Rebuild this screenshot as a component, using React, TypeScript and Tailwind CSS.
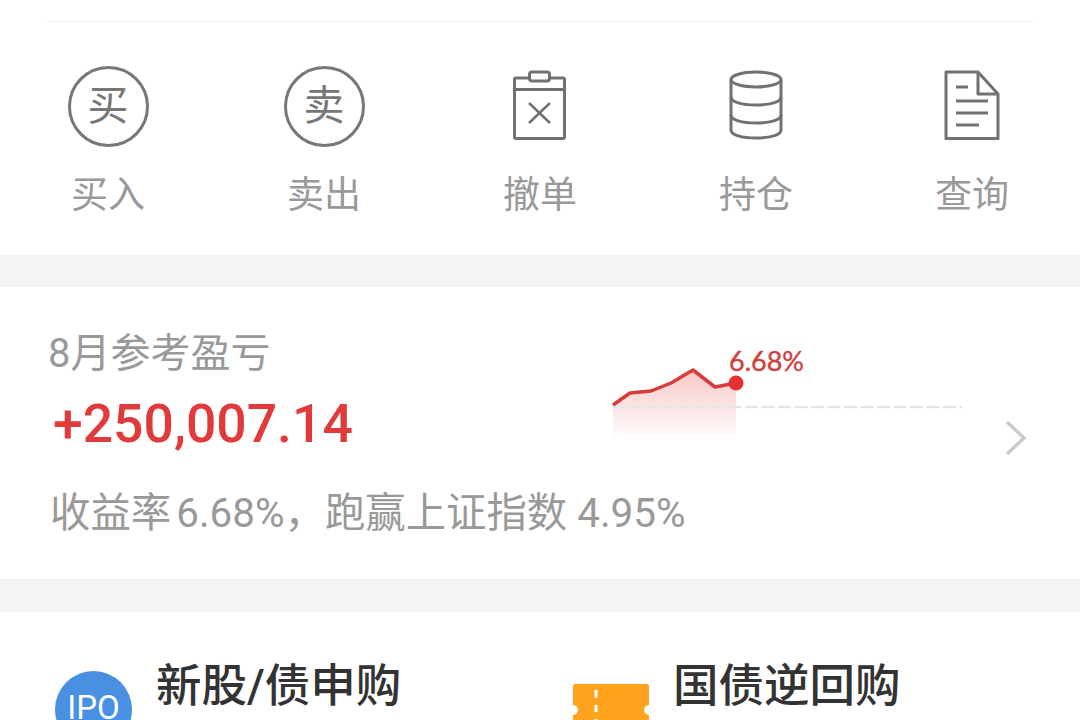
import type { ReactNode } from 'react'

const FONT = "font-['Roboto','Noto_Sans_CJK_SC',sans-serif]"

function CharIcon({ char }: { char: string }) {
  return (
    <div className="w-[81px] h-[81px] rounded-full border-[3px] border-[#777] flex items-center justify-center text-[41px] leading-none text-[#777]">
      {char}
    </div>
  )
}

function CancelIcon() {
  return (
    <svg width="82" height="82" viewBox="0 0 82 82" fill="none" stroke="#717171" strokeWidth="3" strokeLinejoin="round">
      <rect x="15.5" y="13" width="50" height="60.5" rx="1.5" />
      <rect x="30.5" y="7" width="20" height="9" rx="2.5" fill="#fff" />
      <path d="M15.5 24.5H65.5" />
      <path d="M30 38L51 58M51 38L30 58" strokeWidth="2.5" />
    </svg>
  )
}

function HoldIcon() {
  return (
    <svg width="82" height="82" viewBox="0 0 82 82" fill="none" stroke="#717171" strokeWidth="3">
      <ellipse cx="41" cy="14.5" rx="25" ry="7.5" />
      <path d="M16 14.5V65c0 5 11 8 25 8s25-3 25-8V14.5" />
      <path d="M16 32c0 5 11 8 25 8s25-3 25-8" />
      <path d="M16 50c0 5 11 8 25 8s25-3 25-8" />
    </svg>
  )
}

function QueryIcon() {
  return (
    <svg width="82" height="82" viewBox="0 0 82 82" fill="none" stroke="#717171" strokeWidth="3" strokeLinejoin="round">
      <path d="M15 7H47L67 29V73.5H15Z" />
      <path d="M47 7V29H67" />
      <path d="M25 22H37M25 36H57M25 48H57M25 60H48" />
    </svg>
  )
}

const ACTIONS: { label: string; icon: ReactNode }[] = [
  { label: '买入', icon: <CharIcon char="买" /> },
  { label: '卖出', icon: <CharIcon char="卖" /> },
  { label: '撤单', icon: <CancelIcon /> },
  { label: '持仓', icon: <HoldIcon /> },
  { label: '查询', icon: <QueryIcon /> },
]

function Sparkline() {
  return (
    <svg width="352" height="102" viewBox="0 0 352 102" fill="none" className="shrink-0">
      <defs>
        <linearGradient id="spark" x1="0" y1="0" x2="0" y2="1">
          <stop offset="0" stopColor="#e53935" stopOpacity="0.28" />
          <stop offset="1" stopColor="#e53935" stopOpacity="0" />
        </linearGradient>
      </defs>
      <g transform="translate(0 12)">
        <path d="M1 50L18 38L39 36L59 28L81 15L103 32L124 28V85H1Z" fill="url(#spark)" />
        <path d="M1 52H350" stroke="#e6e6e6" strokeWidth="2.5" strokeDasharray="13 3.5" />
        <path d="M1 50L18 38L39 36L59 28L81 15L103 32L124 28" stroke="#d93a3a" strokeWidth="3.5" strokeLinejoin="round" />
        <circle cx="124" cy="28" r="7.5" fill="#e53131" />
        <text x="117" y="16" fontSize="27" fill="#cf4040" stroke="#cf4040" strokeWidth="0.4" fontFamily="Lato, sans-serif">6.68%</text>
      </g>
    </svg>
  )
}

export default function App() {
  return (
    <div className={`h-[720px] overflow-hidden bg-[#f4f4f4] ${FONT}`}>
      <div className="bg-white h-[255px]">
        <div className="mx-[47px] h-[22px] border-b border-[#f0f0f0]" />
        <div className="grid grid-cols-5 pt-[43px]">
          {ACTIONS.map((a) => (
            <div key={a.label} className="flex flex-col items-center">
              <div className="h-[82px] flex items-center justify-center">{a.icon}</div>
              <div className="mt-[23px] text-[37px] leading-[52px] text-[#999]">{a.label}</div>
            </div>
          ))}
        </div>
      </div>

      <div className="mt-[32px] bg-white h-[292px] pt-[39px]">
        <div className="flex">
          <div className="w-[612px] shrink-0 pl-[48px]">
            <div className="text-[40px] leading-[56px] text-[#999]">8月参考盈亏</div>
            <div className="pl-[5px] mt-[12px] text-[53.5px] leading-[60px] font-medium text-[#e03a3a]">
              +250,007.14
            </div>
          </div>
          <div className="mt-[17px]"><Sparkline /></div>
          <svg width="24" height="38" viewBox="0 0 24 38" fill="none" className="mt-[93px] ml-[40px]">
            <path d="M3 3L20 19L3 35" stroke="#cccccc" strokeWidth="3.5" />
          </svg>
        </div>
        <div className="pl-[50px] mt-[29px] text-[40.4px] leading-[56px] text-[#999]">
          收益率<span className="ml-[5px]">6.68%，跑赢上证指数 4.95%</span>
        </div>
      </div>

      <div className="mt-[33px] bg-white h-[200px] grid grid-cols-[518px_1fr] pl-[55px] pt-[46px]">
        <div className="flex">
          <div className="mt-[13px] w-[77px] h-[77px] rounded-full bg-[#4a90e2] flex justify-center text-white text-[33px] pt-[17px] leading-[40px]">
            IPO
          </div>
          <div className="ml-[24px] mt-[3px] text-[45.5px] leading-[52px] font-medium text-[#333]">新股/债申购</div>
        </div>
        <div className="flex">
          <svg width="76" height="50" viewBox="0 0 76 50" className="mt-[26px] shrink-0">
            <path d="M2 0H74a2 2 0 0 1 2 2V21a5 5 0 0 0 0 10V50H0V31a5 5 0 0 0 0-10V2a2 2 0 0 1 2-2Z" fill="#ffa31f" />
            <path d="M23 6V14M23 21V28M23 35V42" stroke="#fff" strokeWidth="3" />
          </svg>
          <div className="ml-[24px] mt-[3px] text-[45.5px] leading-[52px] font-medium text-[#333]">国债逆回购</div>
        </div>
      </div>
    </div>
  )
}
